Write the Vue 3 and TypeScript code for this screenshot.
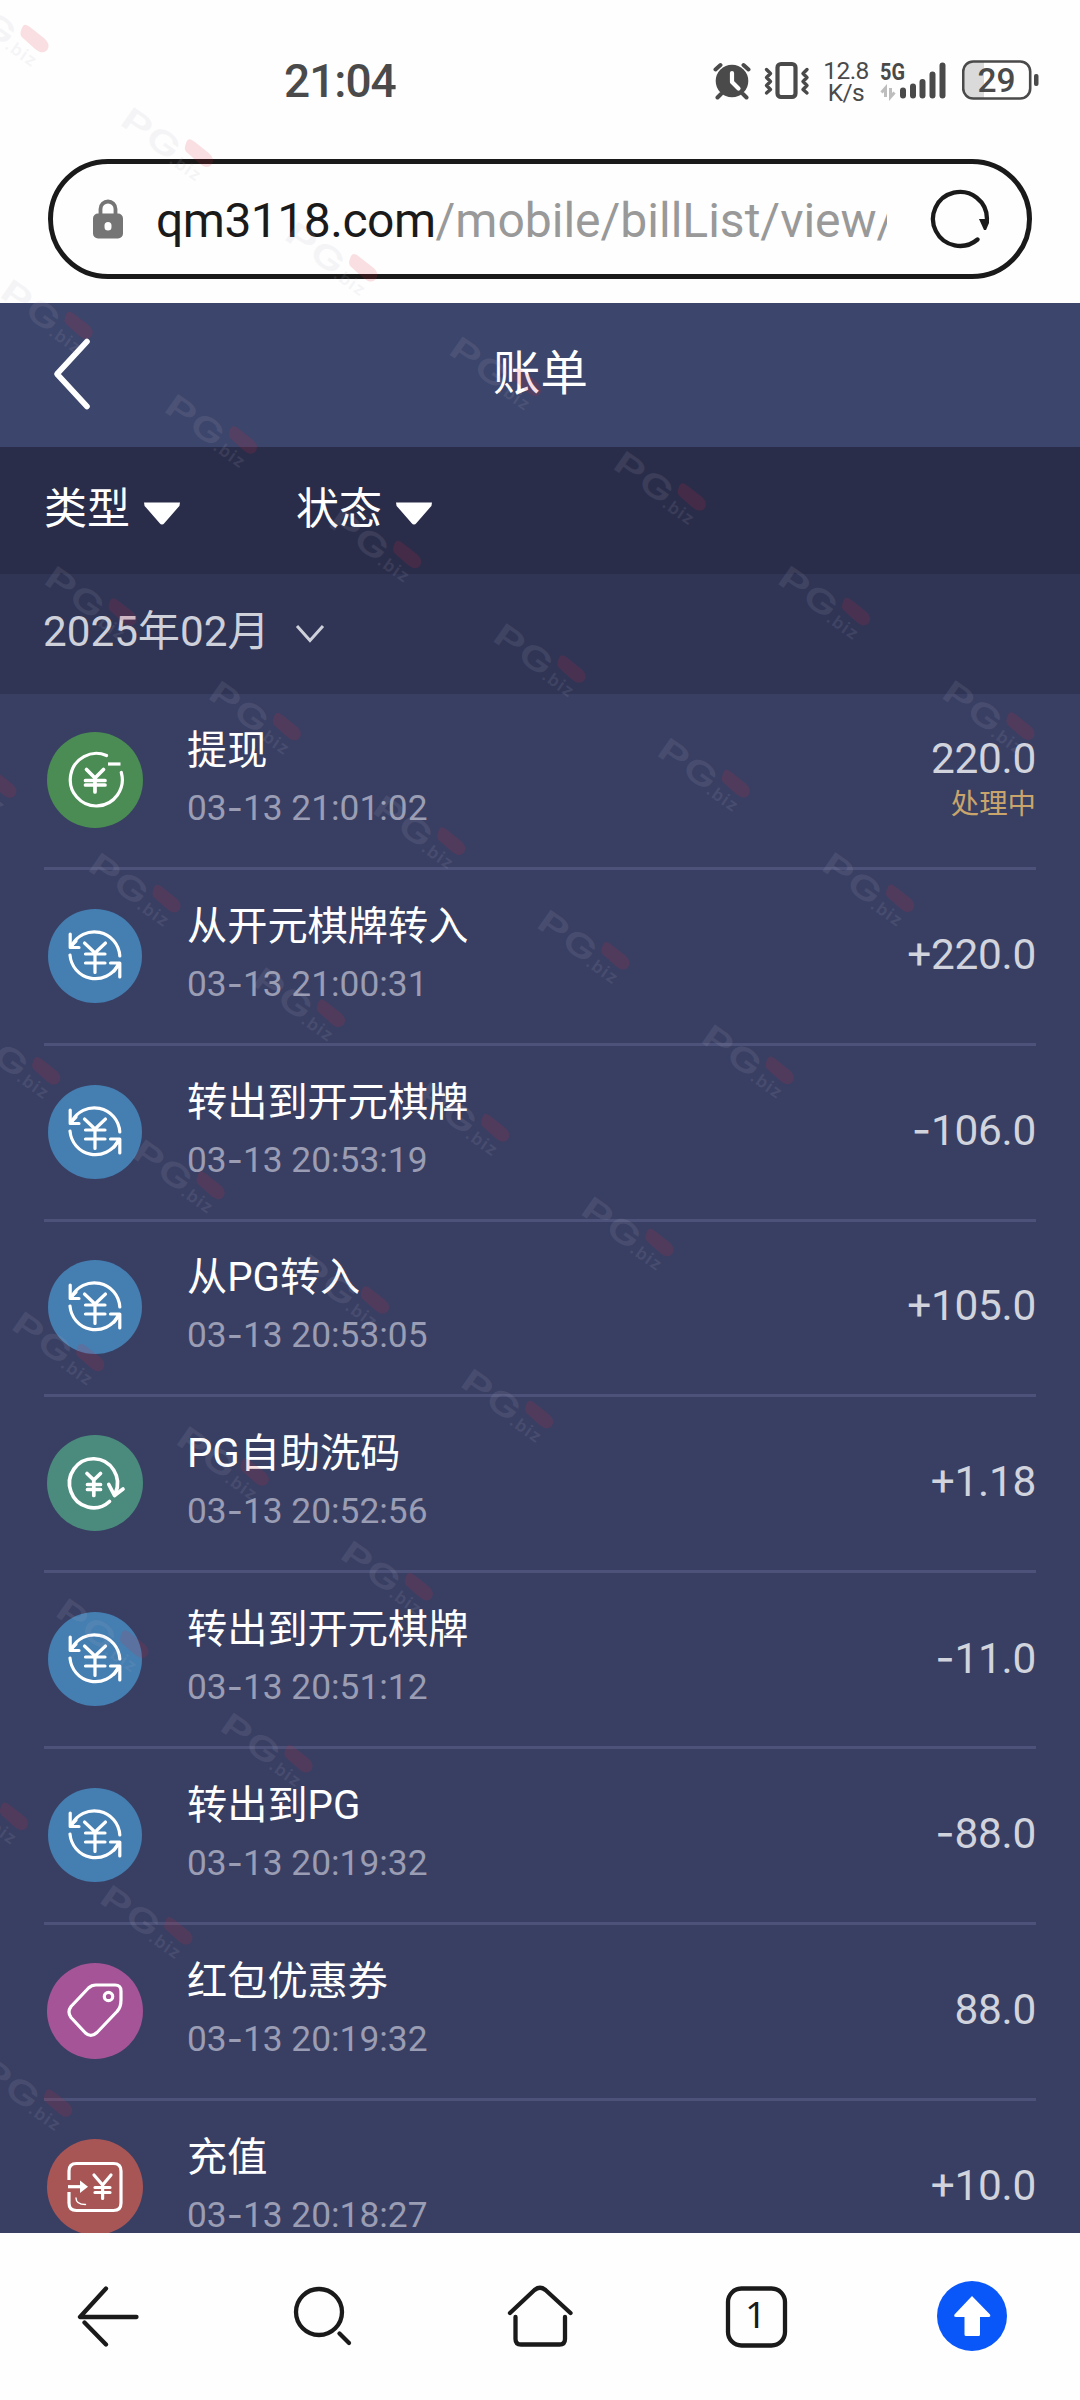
<script setup lang="ts">
type Kind = 'withdraw' | 'transfer' | 'rebate' | 'coupon' | 'deposit'

interface Bill {
  kind: Kind
  title: string
  time: string
  sign: string
  amount: string
  status?: string
}

const bills: Bill[] = [
  { kind: 'withdraw', title: '提现', time: '13 21:01:02', sign: '', amount: '220.0', status: '处理中' },
  { kind: 'transfer', title: '从开元棋牌转入', time: '13 21:00:31', sign: '+', amount: '220.0' },
  { kind: 'transfer', title: '转出到开元棋牌', time: '13 20:53:19', sign: '-', amount: '106.0' },
  { kind: 'transfer', title: '从PG转入', time: '13 20:53:05', sign: '+', amount: '105.0' },
  { kind: 'rebate', title: 'PG自助洗码', time: '13 20:52:56', sign: '+', amount: '1.18' },
  { kind: 'transfer', title: '转出到开元棋牌', time: '13 20:51:12', sign: '-', amount: '11.0' },
  { kind: 'transfer', title: '转出到PG', time: '13 20:19:32', sign: '-', amount: '88.0' },
  { kind: 'coupon', title: '红包优惠券', time: '13 20:19:32', sign: '', amount: '88.0' },
  { kind: 'deposit', title: '充值', time: '13 20:18:27', sign: '+', amount: '10.0' },
]

// Watermarks repeat on a slanted lattice across the page
const marks: { x: number; y: number }[] = []
for (let j = -1; j <= 7; j++) {
  for (let i = -2; i <= 4; i++) {
    const x = 163 + i * 164.3 - j * 120.3
    const y = 411 + i * 114.6 + j * 172.1
    if (x > -110 && x < 1080) marks.push({ x, y })
  }
}
</script>

<template>
  <div class="screen">
    <div class="top">
      <div class="status-bar">
        <span class="clock">21:04</span>
        <div class="indicators">
          <svg class="alarm" width="40" height="40" viewBox="0 0 40 40">
            <circle cx="20" cy="21" r="16.3" fill="#4a4a4a" />
            <path d="M3.5 9.5L8.5 5M36.5 9.5L31.5 5M9 34L5.500 37.500M31 34L34.500 37.500" stroke="#4a4a4a" stroke-width="4" stroke-linecap="round" />
            <path d="M20 13v9l6.500 6.500" fill="none" stroke="#fff" stroke-width="4.200" stroke-linecap="round" stroke-linejoin="round" />
          </svg>
          <svg class="vibrate" width="46" height="40" viewBox="0 0 46 40">
            <rect x="13.500" y="4" width="18" height="33" rx="3.500" fill="none" stroke="#4a4a4a" stroke-width="4.200" />
            <path d="M2.500 9.500l4 4l-4 4l4 4l-4 4l4 4l-4 3.500M43 9.500l-4 4l4 4l-4 4l4 4l-4 4l4 3.500" fill="none" stroke="#4a4a4a" stroke-width="3.400" stroke-linejoin="round" stroke-linecap="round" />
          </svg>
          <div class="speed"><span>12.8</span><span>K/s</span></div>
          <svg class="signal" width="68" height="42" viewBox="0 0 68 42">
            <text x="0" y="20" textLength="25" lengthAdjust="spacingAndGlyphs" font-size="23.500" font-weight="700" fill="#4a4a4a">5G</text>
            <path d="M5.500 37V28L1.500 32.500M10.500 28v9l4-4.500" fill="none" stroke="#bdbdbd" stroke-width="3" />
            <path d="M23 30.500v5M33 26.500v9M42.500 22V35.500M52.500 14.500V35.500M62.500 5.500V35.500" stroke="#4a4a4a" stroke-width="6" stroke-linecap="round" />
          </svg>
          <svg class="battery" width="78" height="40" viewBox="0 0 78 40">
            <path d="M12 2H22V38H12Q2 38 2 28V12Q2 2 12 2Z" fill="#dadada" />
            <rect x="1.200" y="1.500" width="67" height="37" rx="10" fill="none" stroke="#4a4a4a" stroke-width="2.600" />
            <rect x="72" y="14" width="4.500" height="12" rx="2" fill="#4a4a4a" />
            <text x="34.500" y="31.500" text-anchor="middle" font-size="33.500" font-weight="500" fill="#4a4a4a">29</text>
          </svg>
        </div>
      </div>
      <div class="address">
        <svg class="lock" width="30" height="40" viewBox="0 0 30 40">
          <path d="M7.500 16v-6a7.500 7.500 0 0 1 15 0v6" fill="none" stroke="#757575" stroke-width="3.800" />
          <path d="M5 14.500h20a5 5 0 0 1 5 5V34.500a5 5 0 0 1-5 5H5a5 5 0 0 1-5-5V19.500a5 5 0 0 1 5-5ZM15 23a3.500 3.500 0 0 0-3.500 3.500v1.500a3.500 3.500 0 0 0 7 0v-1.500A3.500 3.500 0 0 0 15 23Z" fill="#757575" fill-rule="evenodd" />
        </svg>
        <div class="url"><span class="host">qm3118.com</span><span class="path">/mobile/billList/view/</span></div>
        <svg class="reload" width="64" height="64" viewBox="0 0 64 64">
          <path d="M49.500 52.500A27 27 0 1 1 59 32" fill="none" stroke="#1a1a1a" stroke-width="4.300" stroke-linecap="round" />
          <path d="M51 32H61V36L58 43H56Z" fill="#1a1a1a" />
        </svg>
      </div>
    </div>

    <header class="header">
      <svg class="back" width="38" height="74" viewBox="0 0 38 74">
        <path d="M34 4.500L4 37L34 69.500" fill="none" stroke="#fff" stroke-width="5.600" stroke-linecap="round" stroke-linejoin="round" />
      </svg>
      <h1>账单</h1>
    </header>

    <div class="filters">
      <div class="filter">
        <span>类型</span>
        <svg width="38" height="24" viewBox="0 0 38 24"><path d="M1 .5H37Q37 4 35 5.500L21.500 21Q19 24 16.500 21L3 5.500Q1 4 1 .5Z" fill="#fff" /></svg>
      </div>
      <div class="filter">
        <span>状态</span>
        <svg width="38" height="24" viewBox="0 0 38 24"><path d="M1 .5H37Q37 4 35 5.500L21.500 21Q19 24 16.500 21L3 5.500Q1 4 1 .5Z" fill="#fff" /></svg>
      </div>
    </div>

    <div class="month">
      <span>2025年02月</span>
      <svg width="30" height="20" viewBox="0 0 30 20"><path d="M2 2L15 16.500L28 2" fill="none" stroke="#ced0da" stroke-width="3" /></svg>
    </div>

    <main class="list">
      <div v-for="(bill, n) in bills" :key="n" class="row">
        <svg class="badge" :class="bill.kind" width="98" height="98" viewBox="-49 -49 98 98">
          <circle class="disc" r="48" />
          <g v-if="bill.kind === 'withdraw'" class="line">
            <path d="M26.300 -7.500A26 26.300 0 1 1 11.500 -24.500" />
            <path d="M13 -16H25.500" stroke-linecap="butt" />
            <path class="bold" d="M-8.500 -10.500L0 -2L8.500 -10.500M-9.500 .5H10M-9.500 5H10M0 -2V12" />
          </g>
          <g v-else-if="bill.kind === 'transfer'" class="line">
            <path d="M-23.500 -10A25.500 25.500 0 0 1 24.800 0" />
            <path d="M-24.800 -22V-8.500H-16M-24 -10L-19 -15" />
            <path d="M-25 -1A25.500 25.500 0 0 0 23 9" />
            <path d="M15.500 7H24.800V21M24 8L19 15" />
            <path d="M-10.500 -13L0 -3L10.500 -13M-9.500 -2H10M-9.500 7H10M0 -3V16.500" />
          </g>
          <g v-else-if="bill.kind === 'rebate'" class="line bold">
            <path d="M14.500 18.500A24 24.500 0 1 1 20.500 10" />
            <path d="M13.800 1.500L19.500 12.500L28 6" />
            <path d="M-8 -9.500L-1.200 -3L5.500 -9.500M-7.500 1.500H5.500M-7.500 6.500H5.500M-1.200 -3V12.500" />
          </g>
          <g v-else-if="bill.kind === 'coupon'" class="line">
            <path d="M1 -26H20Q26 -26 26 -20V-11Q26 -3.500 22 .5L2 21.500Q-4 27 -9.500 22L-24 6.500Q-28 1 -24 -4.500L-6.500 -23Q-3.500 -26 1 -26Z" />
            <circle cx="13.500" cy="-14.500" r="4.200" />
          </g>
          <g v-else class="line">
            <path d="M-26 -7V-16Q-26 -23.500 -18.500 -23.500H18.500Q26 -23.500 26 -16V16Q26 23.500 18.500 23.500H-18.500Q-26 23.500 -26 16V5" stroke-linecap="butt" />
            <path d="M-27 -.3H-12" stroke-linecap="butt" />
            <path d="M-15 -6.500L-7 -.3L-15 6Z" fill="#fff" stroke="none" />
            <path class="thin" d="M-19 11Q-19 17.500 -9.500 17.500" />
            <path d="M-1 -12L7.600 -2L16 -12M0 .5H15M0 5.500H15M7.600 -2V11.500" />
          </g>
        </svg>
        <div class="info">
          <div class="title">{{ bill.title }}</div>
          <div class="time">03<i class="dash">-</i>{{ bill.time }}</div>
        </div>
        <div class="sum" :class="{ pending: bill.status }">
          <div class="amount"><i v-if="bill.sign" class="sign" :class="{ minus: bill.sign === '-' }">{{ bill.sign }}</i>{{ bill.amount }}</div>
          <div v-if="bill.status" class="state">{{ bill.status }}</div>
        </div>
      </div>
    </main>

    <nav class="toolbar">
      <svg viewBox="0 0 216 167"><path d="M106 55.500L80 84H136.500M84.500 89.500L106 111.500" /></svg>
      <svg viewBox="0 0 216 167"><circle cx="103" cy="79" r="23" /><path d="M123.500 100.500L133 110" /></svg>
      <svg viewBox="0 0 216 167"><path d="M78 80L102.500 57Q108 52.500 113.500 57L138.500 80M83.500 84V106Q83.500 111.500 89 111.500H127.500Q133 111.500 133 106V84" /></svg>
      <svg viewBox="0 0 216 167"><rect x="80" y="55.500" width="57" height="57" rx="13.500" /><text x="107.500" y="95" text-anchor="middle">1</text></svg>
      <svg viewBox="0 0 216 167"><circle class="blue" cx="108" cy="83" r="35" /><path class="up" d="M108 63L90.500 81.500Q89.500 84 92 84H100.500V101.500Q100.500 103 102 103H114.500Q116 103 116 101.500V84H124.500Q127 84 126 81.500Z" /></svg>
    </nav>

    <svg class="watermark" width="1080" height="2232" viewBox="0 0 1080 2232">
      <g v-for="(m, k) in marks" :key="k" :transform="`translate(${m.x} ${m.y}) rotate(35)`">
        <g class="ink">
          <text x="-1" y="0" font-size="31" textLength="31" lengthAdjust="spacingAndGlyphs">P</text>
          <text x="30" y="1" font-size="32" textLength="34" lengthAdjust="spacingAndGlyphs">G</text>
          <text class="biz" x="62" y="3" font-size="17" textLength="34">.biz</text>
        </g>
        <path class="blob" d="M66 -22Q63 -30 72 -29L90 -28Q99 -27 99 -20Q98 -13 88 -14L71 -16Q67 -17 66 -22Z" />
      </g>
    </svg>
  </div>
</template>

<style>
body {
  margin: 0;
  background: #fefefe;
}
</style>

<style scoped>
.screen {
  position: relative;
  display: flex;
  flex-direction: column;
  width: 1080px;
  height: 2400px;
  overflow: hidden;
  background: #fefefe;
  font-family: Roboto, "Noto Sans CJK SC", sans-serif;
}

.top {
  height: 303px;
  flex: none;
  display: flex;
  flex-direction: column;
}

.status-bar {
  height: 159px;
  display: flex;
  justify-content: space-between;
  padding: 0 40px 0 284px;
}

.clock {
  margin-top: 55px;
  line-height: 52px;
  font-size: 46px;
  font-weight: 500;
  letter-spacing: -1px;
  color: #4a4a4a;
}

.indicators {
  display: flex;
  align-items: flex-start;
  padding-top: 60px;
}

.vibrate {
  margin-left: 12px;
}

.speed {
  width: 46px;
  margin-left: 13px;
  display: flex;
  flex-direction: column;
  align-items: center;
  font-size: 24.5px;
  line-height: 22px;
  letter-spacing: -0.6px;
  color: #4a4a4a;
}

.signal {
  margin-left: 11px;
  overflow: visible;
}

.battery {
  margin-left: 14px;
}

.address {
  box-sizing: border-box;
  width: 984px;
  height: 120px;
  margin-left: 48px;
  border: 5px solid #1a1a1a;
  border-radius: 60px;
  display: flex;
  align-items: center;
  padding: 0 35px 0 40px;
}

.url {
  width: 731px;
  margin-left: 33px;
  padding-top: 3px;
  overflow: hidden;
  white-space: nowrap;
  font-size: 48px;
  line-height: 70px;
}

.host {
  color: #1a1a1a;
  letter-spacing: -0.5px;
}

.path {
  color: #999;
  letter-spacing: 0;
}

.reload {
  margin-left: auto;
}

.header {
  height: 144px;
  flex: none;
  display: flex;
  align-items: center;
  padding-left: 53px;
  background: #3c456b;
}

.back {
  margin-bottom: 2px;
}

.header h1 {
  margin: 0 0 3px 402px;
  font-size: 47.4px;
  line-height: 60px;
  font-weight: 400;
  color: #fff;
  white-space: nowrap;
}

.filters {
  height: 127px;
  flex: none;
  display: flex;
  align-items: center;
  padding-left: 44px;
  background: #2a2d4a;
}

.filter {
  width: 252px;
  display: flex;
  align-items: center;
  font-size: 43px;
  line-height: 60px;
  color: #fff;
}

.filter span {
  margin-bottom: 3px;
}

.filter svg {
  margin: 6px 0 0 13px;
}

.month {
  height: 120px;
  flex: none;
  display: flex;
  align-items: center;
  padding-left: 43px;
  background: #303556;
  font-size: 42.2px;
  line-height: 60px;
  color: #ced0da;
}

.month span {
  margin-bottom: 5px;
}

.month svg {
  margin: 0 0 1px 25px;
}

.list {
  height: 1538.5px;
  flex: none;
  overflow: hidden;
  padding: 0 44px;
  background: #393f63;
}

.row {
  box-sizing: border-box;
  height: 175.85px;
  display: flex;
  align-items: center;
  border-bottom: 3px solid #4c5279;
  padding-bottom: 1px;
}

.badge {
  margin-left: 2px;
  flex: none;
}

.disc { stroke: none; }
.withdraw .disc { fill: #4a8c53; }
.transfer .disc { fill: #457eb1; r: 47px; }
.rebate .disc { fill: #4a8b7d; }
.coupon .disc { fill: #a55497; }
.deposit .disc { fill: #a85556; }

.line {
  fill: none;
  stroke: #fff;
  stroke-width: 3.2;
  stroke-linecap: round;
  stroke-linejoin: round;
}

.bold {
  stroke-width: 3.7;
}

.thin {
  stroke-width: 1.4;
}

.info {
  margin-left: 43px;
  padding-bottom: 3px;
  flex: 1;
}

.title {
  padding-top: 2px;
  font-size: 40.2px;
  line-height: 57px;
  color: #fff;
}

.time {
  font-size: 35.3px;
  line-height: 57px;
  color: #9a9db3;
}

.dash,
.sign {
  font-style: normal;
}

.dash,
.minus {
  font-family: Inter, sans-serif;
}

.sum {
  text-align: right;
  padding-bottom: 2px;
}

.pending {
  padding: 4px 0 0;
}

.amount {
  font-size: 42.4px;
  line-height: 46px;
  letter-spacing: -0.3px;
  color: #d1d3dd;
}

.state {
  font-size: 28.4px;
  line-height: 46px;
  color: #c9a56c;
}

.toolbar {
  flex: 1;
  display: flex;
  background: #fefefe;
}

.toolbar svg {
  width: 216px;
  height: 167px;
  fill: none;
  stroke: #1a1a1a;
  stroke-width: 4.3;
  stroke-linecap: round;
  stroke-linejoin: round;
}

.toolbar text {
  font-family: "Noto Sans", sans-serif;
  font-size: 37px;
  fill: #1a1a1a;
  stroke: none;
}

.toolbar .blue {
  fill: #0957f9;
  stroke: none;
}

.toolbar .up {
  fill: #fff;
  stroke: none;
}

.watermark {
  position: absolute;
  left: 0;
  top: 0;
  pointer-events: none;
}

.ink {
  fill: #b4b4c4;
  font-family: Inter, sans-serif;
  font-weight: 600;
  opacity: 0.12;
}

.blob {
  fill: #e0243c;
  opacity: 0.14;
}
</style>
